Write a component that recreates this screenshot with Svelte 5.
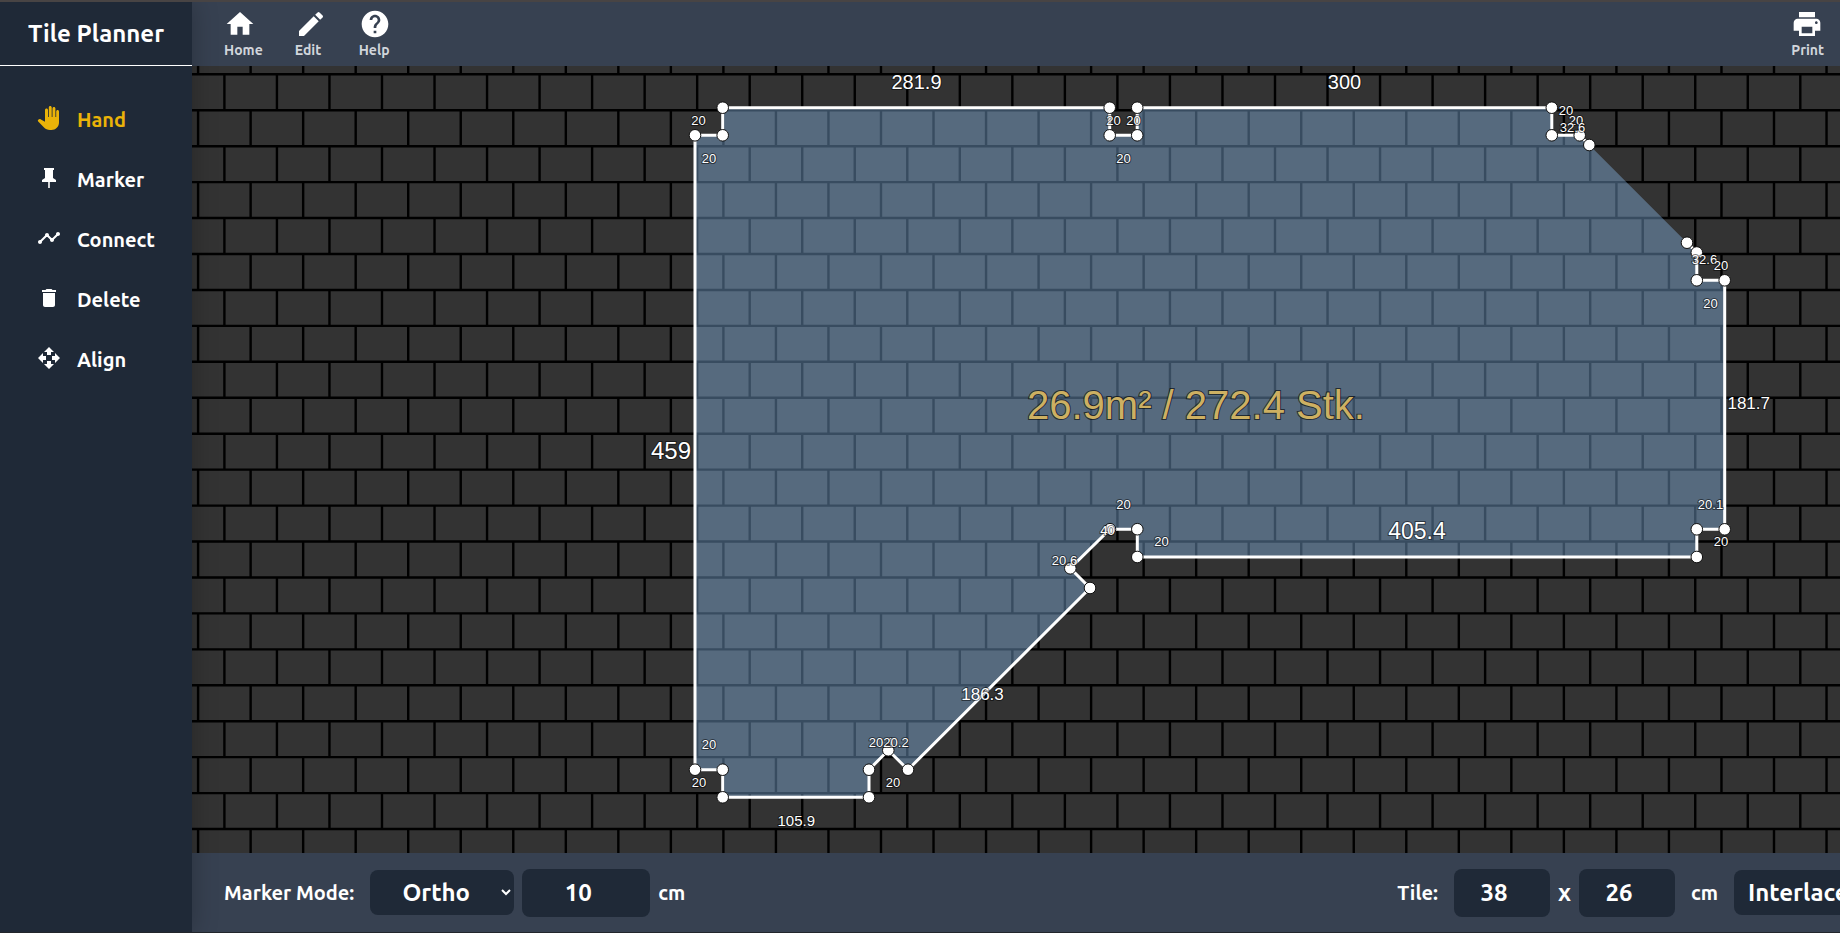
<script>
  const navItems = [
    { name: 'Hand', box: '-1 0 24 24', icon: 'M21 5.5V16.5C21 20.64 17.64 24 13.5 24H12C9.5 24 7.4 23 5.8 21.3L0.2 15.4C-0.3 14.8 -0.2 14.1 0.3 13.7C1 13 2 12.9 2.9 13.4L7 15.8V4C7 3.2 7.7 2.5 8.5 2.5S10 3.2 10 4V11H10.8V1.5C10.8 0.7 11.4 0 12.2 0S13.7 0.7 13.7 1.5V11H14.5V2.5C14.5 1.7 15.2 1 16 1S17.4 1.7 17.4 2.5V11H18.2V5.5C18.2 4.7 18.8 4 19.6 4S21 4.7 21 5.5Z' },
    { name: 'Marker', icon: 'M16 12V4H17V2H7V4H8V12L5 14V16H11.2V22H12.8V16H19V14L16 12Z' },
    { name: 'Connect', icon: 'M23 8c0 1.1-.9 2-2 2-.18 0-.35-.02-.51-.07l-3.56 3.55c.05.16.07.34.07.52 0 1.1-.9 2-2 2s-2-.9-2-2c0-.18.02-.36.07-.52l-2.55-2.55c-.16.05-.34.07-.52.07s-.36-.02-.52-.07l-4.55 4.56c.05.16.07.33.07.51 0 1.1-.9 2-2 2s-2-.9-2-2 .9-2 2-2c.18 0 .35.02.51.07l4.56-4.55C8.02 9.36 8 9.18 8 9c0-1.1.9-2 2-2s2 .9 2 2c0 .18-.02.36-.07.52l2.55 2.55c.16-.05.34-.07.52-.07s.36.02.52.07l3.55-3.56C19.02 8.35 19 8.18 19 8c0-1.1.9-2 2-2s2 .9 2 2z' },
    { name: 'Delete', icon: 'M6 19c0 1.1.9 2 2 2h8c1.1 0 2-.9 2-2V7H6v12zM19 4h-3.5l-1-1h-5l-1 1H5v2h14V4z' },
    { name: 'Align', icon: 'M10 9h4V6h3l-5-5-5 5h3v3zm-1 1H6V7l-5 5 5 5v-3h3v-4zm14 2-5-5v3h-3v4h3v3l5-5zm-9 3h-4v3H7l5 5 5-5h-3v-3z' },
  ];
  let active = $state('Hand');

  const actions = [
    { name: 'Home', icon: 'M10 20v-6h4v6h5v-8h3L12 3 2 12h3v8z' },
    { name: 'Edit', icon: 'M3 17.25V21h3.75L17.81 9.94l-3.75-3.75L3 17.25zM20.71 7.04c.39-.39.39-1.02 0-1.41l-2.34-2.34a.9959.9959 0 0 0-1.41 0l-1.83 1.83 3.75 3.75 1.83-1.83z' },
    { name: 'Help', icon: 'M12 2C6.48 2 2 6.48 2 12s4.48 10 10 10 10-4.48 10-10S17.52 2 12 2zm1 17h-2v-2h2v2zm2.07-7.75-.9.92C13.45 12.9 13 13.5 13 15h-2v-.5c0-1.1.45-2.1 1.17-2.83l1.24-1.26c.37-.36.59-.86.59-1.41 0-1.1-.9-2-2-2s-2 .9-2 2H8c0-2.21 1.79-4 4-4s4 1.79 4 4c0 .88-.36 1.68-.93 2.25z' },
  ];
  const printIcon = 'M19 8H5c-1.66 0-3 1.34-3 3v6h4v4h12v-4h4v-6c0-1.66-1.34-3-3-3zm-3 11H8v-5h8v5zm3-7c-.55 0-1-.45-1-1s.45-1 1-1 1 .45 1 1-.45 1-1 1zm-1-9H6v4h12V3z';

  let mode = $state('Ortho');
  let step = $state('10');
  let tileW = $state('38');
  let tileH = $state('26');
  let layout = $state('Interlaced');

  // Tile grid, in canvas units
  const pitchX = 52.53;
  const pitchY = 35.94;
  const rows = 60;
  const cols = 80;
  let grid = '';
  for (let r = 0; r < rows; r++) {
    const y = 8.3 + (r - 1) * pitchY;
    grid += `M0 ${y.toFixed(2)}H${cols * pitchX}`;
    const shift = r % 2 ? 32.4 : 6.1;
    for (let c = 0; c < cols; c++) {
      grid += `M${(shift + c * pitchX).toFixed(2)} ${y.toFixed(2)}v${pitchY}`;
    }
  }

  // Room outline, clockwise, starting after the open side
  const outline = [
    [1495, 176.7], [1504.8, 186.5], [1504.8, 214.3], [1532.7, 214.3],
    [1532.7, 463.3], [1504.8, 463.3], [1504.8, 491], [945.3, 491],
    [945.3, 463.2], [918, 463.2], [878.3, 502.3], [898, 522],
    [716, 703.7], [696.3, 684.3], [677, 703.7], [677, 731.3],
    [530.7, 731.3], [530.7, 703.7], [503, 703.7], [503, 69.3],
    [530.7, 69.3], [530.7, 41.7], [917.7, 41.7], [917.7, 69.3],
    [945.2, 69.3], [945.2, 41.7], [1359.8, 41.7], [1359.8, 69.3],
    [1387.7, 69.3], [1397.3, 79],
  ];
  const points = outline.map((p) => p.join(',')).join(' ');

  const labels = [
    ['281.9', 724.5, 23, 20], ['300', 1152.5, 23, 20], ['459', 479, 393, 24],
    ['181.7', 1556.7, 343, 17], ['405.4', 1225, 473, 23], ['186.3', 790.5, 634, 17],
    ['105.9', 604.3, 760, 15],
    ['20', 506.5, 59, 13], ['20', 517, 97, 13], ['20', 921.5, 59, 13],
    ['20', 941.5, 59, 13], ['20', 931.5, 97, 13], ['20', 1374, 49, 13],
    ['20', 1384, 59, 13], ['32.6', 1380.5, 66, 13], ['32.6', 1512.5, 198, 13],
    ['20', 1529, 204, 13], ['20', 1518.5, 242, 13], ['20.1', 1518.5, 443, 13],
    ['20', 1529, 480, 13], ['20', 931.5, 443, 13], ['40', 915.5, 469, 13],
    ['20', 969.5, 480, 13], ['20.6', 872.5, 499, 13], ['20', 517, 683, 13],
    ['20', 507, 721, 13], ['20.1', 689.5, 681, 13], ['20.2', 704, 681, 13],
    ['20', 701, 721, 13],
  ];
</script>

<div class="app">
  <aside class="sidebar">
    <h1>Tile Planner</h1>
    <nav>
      {#each navItems as item}
        <button class:active={active === item.name} onclick={() => (active = item.name)}>
          <svg viewBox={item.box ?? '0 0 24 24'} aria-hidden="true"><path d={item.icon} /></svg>
          <span>{item.name}</span>
        </button>
      {/each}
    </nav>
  </aside>

  <div class="main">
    <header>
      {#each actions as action}
        <button>
          <svg viewBox="0 0 24 24" aria-hidden="true"><path d={action.icon} /></svg>
          <span>{action.name}</span>
        </button>
      {/each}
      <button class="print">
        <svg viewBox="0 0 24 24" aria-hidden="true"><path d={printIcon} /></svg>
        <span>Print</span>
      </button>
    </header>

    <div class="stage">
      <svg class="plan" role="img" aria-label="Floor plan">
        <path class="grid" d={grid} />
        <polygon class="room" {points} />
        <polyline class="walls" {points} />
        {#each outline as [x, y]}
          <circle class="node" cx={x} cy={y} r="5.8" />
        {/each}
        {#each labels as [text, x, y, size]}
          <text class="length" {x} {y} font-size={size}>{text}</text>
        {/each}
        <text class="total" x="1004" y="353">26.9m² / 272.4 Stk.</text>
      </svg>
    </div>

    <footer>
      <label for="mode">Marker Mode:</label>
      <select id="mode" class="mode" bind:value={mode}>
        <option>Ortho</option>
        <option>Free</option>
      </select>
      <input class="step" aria-label="Marker step" bind:value={step} />
      <span class="unit">cm</span>
      <label class="tile" for="tile-width">Tile:</label>
      <input id="tile-width" class="size" bind:value={tileW} />
      <span class="times">x</span>
      <input class="size" aria-label="Tile height" bind:value={tileH} />
      <span class="unit wide">cm</span>
      <select class="layout" aria-label="Tile layout" bind:value={layout}>
        <option>Interlaced</option>
        <option>Grid</option>
      </select>
    </footer>
  </div>
</div>

<style>
  :global(body) {
    margin: 0;
    background: #1f2937;
  }
  .app {
    display: flex;
    height: 100vh;
    box-sizing: border-box;
    border-top: 2px solid #484444;
    border-bottom: 1px solid #22262b;
    overflow: hidden;
    color: #fff;
    font-family: Ubuntu, 'Noto Sans', sans-serif;
    font-weight: 700;
    background: #374151;
  }
  button, input, select {
    font: inherit;
    color: inherit;
    border: 0;
    margin: 0;
    background: none;
  }
  svg {
    display: block;
    fill: currentColor;
  }
  .sidebar {
    position: relative;
    z-index: 1;
    flex: none;
    width: 192px;
    background: #1f2937;
    box-shadow: 0 0 24px rgba(0, 0, 0, 0.25);
  }
  h1 {
    margin: 0;
    height: 63px;
    border-bottom: 1px solid #fff;
    font-size: 24px;
    line-height: 64px;
    text-align: center;
    white-space: nowrap;
  }
  nav {
    display: flex;
    flex-direction: column;
    padding-top: 23px;
  }
  nav button {
    display: flex;
    align-items: center;
    gap: 16px;
    height: 60px;
    padding: 0 0 0 37px;
    font-size: 20px;
    cursor: pointer;
  }
  nav svg {
    width: 24px;
    height: 24px;
    margin-bottom: 3px;
  }
  nav .active {
    color: #eab308;
  }
  .main {
    flex: 1;
    min-width: 0;
    display: flex;
    flex-direction: column;
  }
  header {
    flex: none;
    display: flex;
    gap: 32px;
    height: 64px;
    box-sizing: border-box;
    padding: 6px 16px 0 32px;
  }
  header button {
    display: flex;
    flex-direction: column;
    align-items: flex-start;
    padding: 0;
    color: #d1d5db;
    font-size: 14px;
    line-height: 20px;
    cursor: pointer;
  }
  header svg {
    width: 32px;
    height: 32px;
    color: #fff;
  }
  .print {
    margin-left: auto;
  }
  .stage {
    flex: 1;
    min-height: 0;
    background: #333;
    overflow: hidden;
  }
  .plan {
    width: 100%;
    height: 100%;
    font-family: 'Liberation Sans', Arial, sans-serif;
    font-weight: 400;
  }
  .grid {
    fill: none;
    stroke: #000;
    stroke-width: 2.4;
  }
  .room {
    fill: rgba(140, 190, 240, 0.4);
  }
  .walls {
    fill: none;
    stroke: #fff;
    stroke-width: 3;
  }
  .node {
    fill: #fff;
    stroke: #111;
    stroke-width: 1;
  }
  .length {
    fill: #fff;
    stroke: rgba(0, 0, 0, 0.5);
    stroke-width: 2;
    paint-order: stroke;
    text-anchor: middle;
  }
  .total {
    fill: #cdb062;
    stroke: rgba(0, 0, 0, 0.6);
    stroke-width: 2;
    paint-order: stroke;
    font-size: 40px;
    text-anchor: middle;
  }
  footer {
    flex: none;
    display: flex;
    align-items: center;
    height: 79px;
    padding-left: 32px;
    font-size: 20px;
    white-space: nowrap;
    overflow: hidden;
  }
  footer input, footer select {
    flex: none;
    box-sizing: border-box;
    border-radius: 8px;
    background-color: #1f2937;
    font-size: 24px;
    text-align: center;
  }
  footer input {
    height: 48px;
    padding: 0 16px 0 0;
  }
  footer select {
    height: 45px;
  }
  .mode {
    width: 144px;
    margin: 0 8px 0 16px;
  }
  .step {
    width: 128px;
  }
  .unit {
    margin-left: 8px;
  }
  .tile {
    margin-left: auto;
    margin-right: 16px;
  }
  .size {
    width: 96px;
  }
  .times {
    margin: 0 8px;
    font-size: 24px;
  }
  .wide {
    margin: 0 16px;
  }
  footer .layout {
    width: 176px;
    margin-right: -70px;
    padding-left: 10px;
    text-align: left;
  }
</style>
